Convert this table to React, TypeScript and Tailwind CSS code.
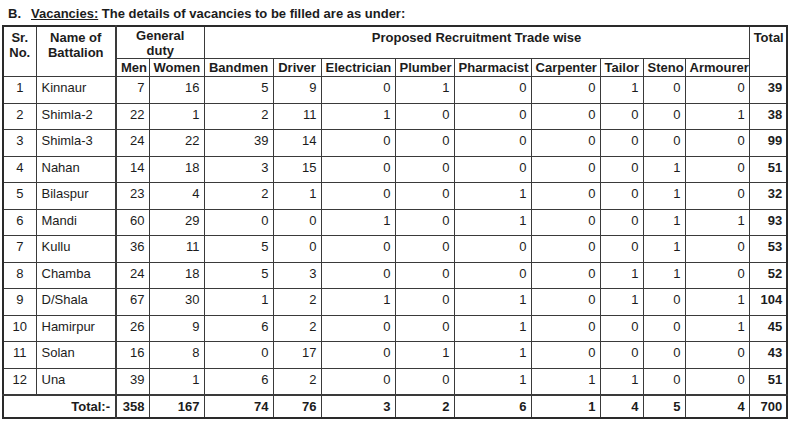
const rows: [number, string, number[], number][] = [
  [1, "Kinnaur", [7, 16, 5, 9, 0, 1, 0, 0, 1, 0, 0], 39],
  [2, "Shimla-2", [22, 1, 2, 11, 1, 0, 0, 0, 0, 0, 1], 38],
  [3, "Shimla-3", [24, 22, 39, 14, 0, 0, 0, 0, 0, 0, 0], 99],
  [4, "Nahan", [14, 18, 3, 15, 0, 0, 0, 0, 0, 1, 0], 51],
  [5, "Bilaspur", [23, 4, 2, 1, 0, 0, 1, 0, 0, 1, 0], 32],
  [6, "Mandi", [60, 29, 0, 0, 1, 0, 1, 0, 0, 1, 1], 93],
  [7, "Kullu", [36, 11, 5, 0, 0, 0, 0, 0, 0, 1, 0], 53],
  [8, "Chamba", [24, 18, 5, 3, 0, 0, 0, 0, 1, 1, 0], 52],
  [9, "D/Shala", [67, 30, 1, 2, 1, 0, 1, 0, 1, 0, 1], 104],
  [10, "Hamirpur", [26, 9, 6, 2, 0, 0, 1, 0, 0, 0, 1], 45],
  [11, "Solan", [16, 8, 0, 17, 0, 1, 1, 0, 0, 0, 0], 43],
  [12, "Una", [39, 1, 6, 2, 0, 0, 1, 1, 1, 0, 0], 51],
];

const totals = [358, 167, 74, 76, 3, 2, 6, 1, 4, 5, 4];
const trades = ["Bandmen", "Driver", "Electrician", "Plumber", "Pharmacist", "Carpenter", "Tailor", "Steno", "Armourer"];
// column widths measured from the scan
const widths = [33, 80, 33, 55, 69, 48, 74, 59, 77, 69, 43, 42, 64, 38];

const cell = "border border-[#3a3a3a] px-[4px]";

export default function App() {
  return (
    <div className="w-[796px] h-[422px] bg-white text-[#1c1c1c] overflow-hidden" style={{ fontFamily: '"Liberation Sans", Arial, sans-serif' }}>
      <div className="flex items-center gap-[10px] pl-[8px] pt-[2px] h-[25px] text-[13px] font-bold">
        <span>B.</span>
        <span>
          <span className="underline">Vacancies:</span> The details of vacancies to be filled are as under:
        </span>
      </div>
      <table className="ml-[2px] w-[784px] table-fixed border-collapse border-2 border-[#2a2a2a] text-[13px] leading-[15px]">
        <colgroup>
          {widths.map((w, i) => (
            <col key={i} style={{ width: w }} />
          ))}
        </colgroup>
        <thead>
          <tr className="h-[31px] font-bold">
            <th rowSpan={2} className={`${cell} align-top pt-[3px] text-center`}>Sr.<br />No.</th>
            <th rowSpan={2} className={`${cell} align-top pt-[3px] text-center border-r-2`}>Name of<br />Battalion</th>
            <th colSpan={2} className={`${cell} align-top pt-[1px] text-center`}>General<br />duty</th>
            <th colSpan={9} className={`${cell} align-top pt-[3px] text-center`}>Proposed Recruitment Trade wise</th>
            <th rowSpan={2} className={`${cell} align-top pt-[3px] text-center`}>Total</th>
          </tr>
          <tr className="h-[18px] font-bold leading-[14px]">
            <th className={`${cell} text-center px-[1px]`}>Men</th>
            <th className={`${cell} text-center px-[1px]`}>Women</th>
            {trades.map((t) => (
              <th key={t} className={`${cell} text-center px-[1px]`}>{t}</th>
            ))}
          </tr>
        </thead>
        <tbody>
          {rows.map(([no, name, vals, total]) => (
            <tr key={no} className="h-[26.5px]">
              <td className={`${cell} text-center align-top pt-[3px]`}>{no}</td>
              <td className={`${cell} align-top pt-[3px] pl-[5px] border-r-2`}>{name}</td>
              {vals.map((v, i) => (
                <td key={i} className={`${cell} text-right align-top pt-[3px]`}>{v}</td>
              ))}
              <td className={`${cell} text-right align-top pt-[3px] font-bold`}>{total}</td>
            </tr>
          ))}
          <tr className="h-[23px] font-bold">
            <td colSpan={2} className={`${cell} text-right pr-[5px] border-r-2 border-t-2`}>Total:-</td>
            {totals.map((v, i) => (
              <td key={i} className={`${cell} text-right border-t-2`}>{v}</td>
            ))}
            <td className={`${cell} text-right border-t-2`}>700</td>
          </tr>
        </tbody>
      </table>
    </div>
  );
}
